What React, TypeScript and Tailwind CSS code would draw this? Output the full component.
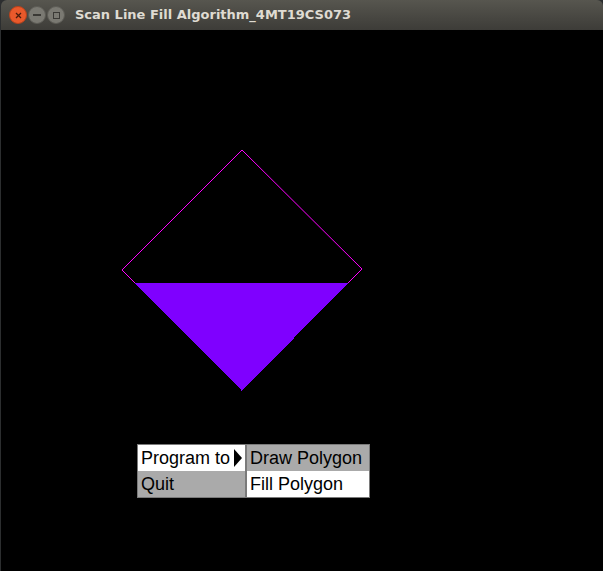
import React from 'react';

const MenuItem: React.FC<{ label: string; active?: boolean; arrow?: boolean }> = ({ label, active, arrow }) => (
  <div
    className={`flex h-[26px] items-center justify-between pl-[3px] pr-[2px] ${active ? 'bg-[#aaaaaa]' : 'bg-white'}`}
  >
    <span>{label}</span>
    {arrow && (
      <svg width="10" height="18" viewBox="0 0 10 18">
        <polygon points="1,0 9,9 1,18" fill="#000" />
      </svg>
    )}
  </div>
);

const App: React.FC = () => {
  return (
    <div className="w-[603px] h-[571px] bg-[#2c2e2f] overflow-hidden">
      <div className="flex h-full flex-col pl-[1px]">
        <div className="flex h-[30px] items-center rounded-t-[6px] bg-gradient-to-b from-[#57564f] to-[#3d3c38] pl-[8px]">
          <div className="flex items-center gap-[1px]">
            <div className="flex h-[18px] w-[18px] items-center justify-center rounded-full bg-[#e9592b] border border-[#b8421c]">
              <svg width="7" height="7" viewBox="0 0 7 7">
                <path d="M1 1 L6 6 M6 1 L1 6" stroke="#4a1c0c" strokeWidth="1.3" />
              </svg>
            </div>
            <div className="flex h-[18px] w-[18px] items-center justify-center rounded-full bg-[#7a7972] border border-[#5c5b55]">
              <div className="h-[1.5px] w-[8px] bg-[#3a3935]" />
            </div>
            <div className="flex h-[18px] w-[18px] items-center justify-center rounded-full bg-[#7a7972] border border-[#5c5b55]">
              <div className="h-[7px] w-[7px] border border-[#3a3935]" />
            </div>
          </div>
          <span className="ml-[10px] font-['DejaVu_Sans',sans-serif] text-[13px] font-bold text-[#dfdbd2]">
            Scan Line Fill Algorithm_4MT19CS073
          </span>
        </div>
        <div className="relative flex-1 bg-black">
          <svg width="602" height="541" className="block" shapeRendering="crispEdges">
            <polygon points="134,253 347,253 241,361" fill="#7f00ff" />
            <polyline
              points="121,240 241,120 361,239"
              fill="none"
              stroke="#ff00ff"
              strokeWidth="1"
              shapeRendering="auto"
            />
            <line x1="121" y1="240" x2="134" y2="253" stroke="#ff00ff" strokeWidth="1" shapeRendering="auto" />
            <line x1="361" y1="239" x2="347" y2="253" stroke="#ff00ff" strokeWidth="1" shapeRendering="auto" />
          </svg>
          <div className="absolute left-[136px] top-[414px] flex font-['Liberation_Sans',Arial,sans-serif] text-[18px] leading-none text-black">
            <div className="w-[109px] border border-[#7a7a7a]">
              <MenuItem label="Program to" arrow />
              <MenuItem label="Quit" active />
            </div>
            <div className="w-[124px] border border-[#7a7a7a]">
              <MenuItem label="Draw Polygon" active />
              <MenuItem label="Fill Polygon" />
            </div>
          </div>
        </div>
      </div>
    </div>
  );
};

export default App;
